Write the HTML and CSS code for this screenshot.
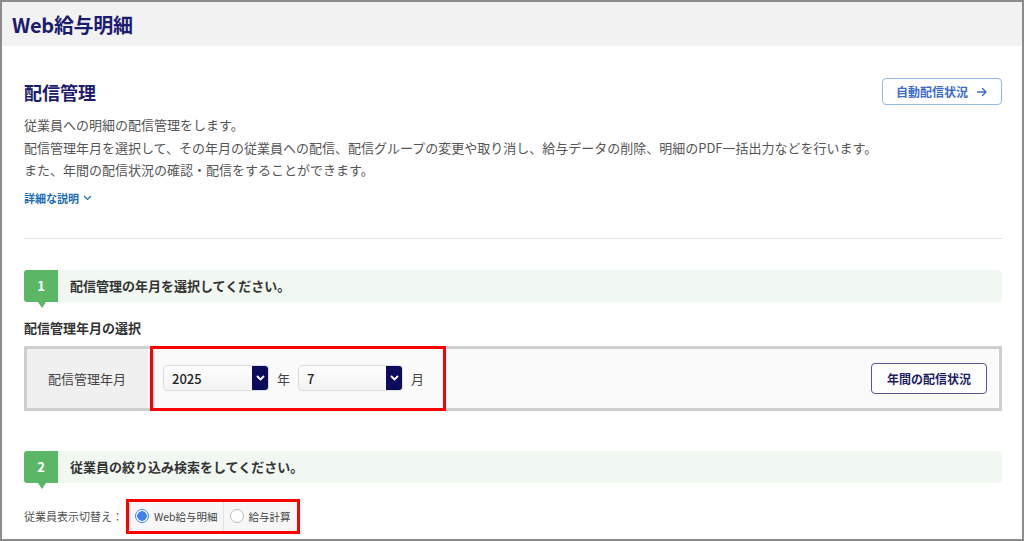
FILE: index.html
```html
<!DOCTYPE html>
<html lang="ja">
<head>
  <meta charset="UTF-8">
  <title>Web給与明細 - 配信管理</title>
  <link rel="stylesheet" href="styles.css">
</head>
<body>
<div class="frame">

  <header class="app-header">
    <h1>Web給与明細</h1>
  </header>

  <main class="content">
    <div class="page-head">
      <h2>配信管理</h2>
      <button class="auto-btn">自動配信状況
        <svg width="12" height="12" viewBox="0 0 12 12"><path d="M1.5 6h8.5M6.5 2.5L10 6l-3.5 3.5" fill="none" stroke="currentColor" stroke-width="1.4" stroke-linecap="round" stroke-linejoin="round"/></svg>
      </button>
    </div>

    <div class="desc">
      <p>従業員への明細の配信管理をします。</p>
      <p>配信管理年月を選択して、その年月の従業員への配信、配信グループの変更や取り消し、給与データの削除、明細のPDF一括出力などを行います。</p>
      <p>また、年間の配信状況の確認・配信をすることができます。</p>
    </div>
    <a class="more-link">詳細な説明
      <svg width="9" height="6" viewBox="0 0 9 6"><path d="M1 1l3.5 3.5L8 1" fill="none" stroke="currentColor" stroke-width="1.2"/></svg>
    </a>

    <hr class="divider">

    <div class="step">
      <span class="step-num">1</span>
      <span class="step-text">配信管理の年月を選択してください。</span>
    </div>

    <h3 class="sub-title">配信管理年月の選択</h3>
    <div class="select-box">
      <div class="sb-label">配信管理年月</div>
      <div class="sb-body">
        <div class="highlight ym">
          <div class="select s-year">
            <span>2025</span>
            <i class="sel-arrow"><svg width="9" height="6" viewBox="0 0 9 6"><path d="M1 1l3.5 3.5L8 1" fill="none" stroke="#fff" stroke-width="1.8"/></svg></i>
          </div>
          <span class="unit">年</span>
          <div class="select s-month">
            <span>7</span>
            <i class="sel-arrow"><svg width="9" height="6" viewBox="0 0 9 6"><path d="M1 1l3.5 3.5L8 1" fill="none" stroke="#fff" stroke-width="1.8"/></svg></i>
          </div>
          <span class="unit">月</span>
        </div>
        <button class="year-btn">年間の配信状況</button>
      </div>
    </div>

    <div class="step step2">
      <span class="step-num">2</span>
      <span class="step-text">従業員の絞り込み検索をしてください。</span>
    </div>

    <div class="switch-row">
      <span class="switch-label">従業員表示切替え：</span>
      <div class="highlight radio-wrap">
        <div class="radio-group">
          <label class="radio on"><i class="dot"></i>Web給与明細</label>
          <label class="radio"><i class="dot"></i>給与計算</label>
        </div>
      </div>
    </div>
  </main>

</div>
</body>
</html>
```

FILE: styles.css
```css
body {
  margin: 0;
  font-family: "Noto Sans CJK JP", "Noto Sans", sans-serif;
  color: #444;
}
.frame {
  width: 1024px;
  height: 541px;
  box-sizing: border-box;
  border: 2px solid #8c8c8c;
  overflow: hidden;
  background: #fff;
}

/* ヘッダー */
.app-header {
  height: 44px;
  background: #f2f2f2;
  display: flex;
  align-items: center;
  padding-left: 10px;
}
.app-header h1 {
  margin: 0;
  font-size: 20px;
  font-weight: bold;
  color: #1b1b6f;
  letter-spacing: -0.3px;
}

.content {
  padding: 32px 20px 0 22px;
}
.page-head {
  display: flex;
  align-items: center;
  justify-content: space-between;
  height: 27px;
}
.page-head h2 {
  margin: 0;
  font-size: 18px;
  color: #1b1b6f;
}
.auto-btn {
  width: 120px;
  height: 27px;
  border: 1px solid #94b6ea;
  border-radius: 4px;
  background: #fff;
  color: #3b6ccc;
  font-family: inherit;
  font-size: 12px;
  font-weight: bold;
  display: flex;
  align-items: center;
  justify-content: center;
  gap: 8px;
  padding: 0;
}

.desc {
  margin-top: 9px;
  font-size: 13px;
  line-height: 22.5px;
  color: #555;
}
.desc p { margin: 0; }
.more-link {
  display: inline-flex;
  align-items: center;
  gap: 4px;
  margin-top: 8px;
  font-size: 11px;
  line-height: 16px;
  font-weight: bold;
  color: #1d6db5;
  cursor: pointer;
}

.divider {
  border: 0;
  border-top: 1px solid #e3e3e3;
  margin: 30px 0 31px;
}

/* ステップ見出し */
.step {
  height: 32px;
  background: #f1f8f1;
  border-radius: 4px;
  display: flex;
  align-items: center;
}
.step-num {
  position: relative;
  width: 34px;
  height: 32px;
  background: #5bb766;
  border-radius: 3px 0 0 3px;
  color: #fff;
  font-size: 13px;
  font-weight: bold;
  display: flex;
  align-items: center;
  justify-content: center;
}
.step-num::after {
  content: "";
  position: absolute;
  left: 14px;
  bottom: -6px;
  border-left: 4px solid transparent;
  border-right: 4px solid transparent;
  border-top: 6px solid #5bb766;
}
.step-text {
  padding-left: 12px;
  font-size: 13px;
  font-weight: bold;
  color: #333;
}
.step2 { margin-top: 40px; }

.sub-title {
  margin: 16px 0 8px;
  font-size: 13px;
  line-height: 20px;
  color: #333;
}

/* 年月の選択 */
.select-box {
  height: 65px;
  box-sizing: border-box;
  border: 3px solid #cfcfcf;
  display: flex;
}
.sb-label {
  width: 121px;
  box-sizing: border-box;
  padding-left: 21px;
  background: #f0f0f0;
  display: flex;
  align-items: center;
  font-size: 13px;
  color: #444;
}
.sb-body {
  flex: 1;
  background: #fafafa;
  display: flex;
  align-items: center;
  justify-content: space-between;
  padding-left: 2px;
  padding-right: 12px;
}
.highlight {
  border: 3px solid #f00;
  box-sizing: border-box;
}
.ym {
  align-self: stretch;
  margin: -3px 0;
  width: 296px;
  display: flex;
  align-items: center;
  padding-left: 10px;
}
.select {
  height: 26px;
  box-sizing: border-box;
  border: 1px solid #dcdcdc;
  border-radius: 4px;
  background: linear-gradient(#fdfdfd, #f3f3f3);
  display: flex;
  align-items: center;
  justify-content: space-between;
  padding-left: 8px;
  font-size: 13px;
  font-weight: 500;
  color: #222;
  overflow: hidden;
}
.s-year { width: 106px; }
.s-month { width: 105px; }
.sel-arrow {
  width: 17px;
  height: 26px;
  background: #0c0c5c;
  display: flex;
  align-items: center;
  justify-content: center;
  margin-right: -1px;
}
.unit {
  font-size: 13px;
  color: #444;
  margin: 0 8px;
}
.year-btn {
  width: 116px;
  height: 31px;
  border: 1px solid #55558f;
  border-radius: 4px;
  background: #fff;
  color: #1d1d66;
  font-family: inherit;
  font-size: 12px;
  font-weight: bold;
  padding: 0;
}

/* 表示切替え */
.switch-row {
  margin-top: 16px;
  display: flex;
  align-items: center;
}
.switch-label {
  font-size: 11px;
  color: #555;
  width: 102px;
}
.radio-wrap {
  width: 174px;
  height: 35px;
}
.radio-group {
  display: flex;
  height: 100%;
  background: #f7f7f7;
}
.radio {
  display: flex;
  align-items: center;
  gap: 5px;
  font-size: 10.5px;
  color: #444;
  padding: 0 5px 0 6px;
  white-space: nowrap;
}
.radio + .radio {
  border-left: 1px solid #e2e2e2;
}
.dot {
  flex: none;
  width: 14px;
  height: 14px;
  box-sizing: border-box;
  border-radius: 50%;
  border: 1px solid #bbb;
  background: #fff;
}
.radio.on .dot {
  border: 1px solid #3f82ef;
  background: radial-gradient(circle, #3f82ef 0 4.5px, #fff 5px);
}
```
